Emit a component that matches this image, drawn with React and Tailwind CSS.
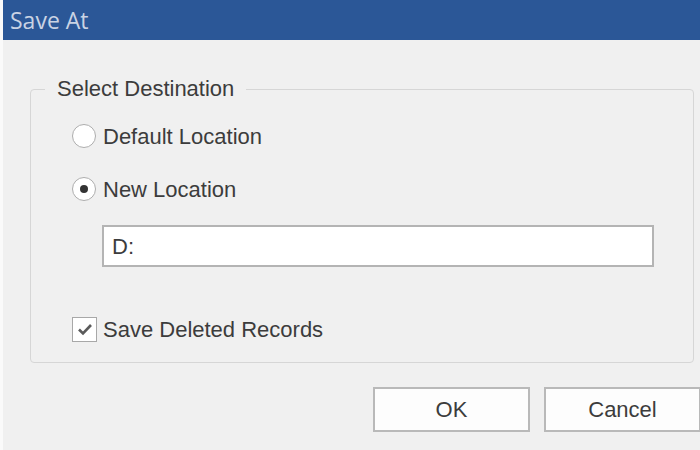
import React from 'react';

const Radio = ({ checked, label }) => (
  <label className="flex items-center h-[30px]">
    <span className="w-[24px] h-[24px] rounded-full border-[1.5px] border-[#adadad] bg-white flex items-center justify-center">
      {checked && <span className="w-[8px] h-[8px] rounded-full bg-[#333333]" />}
    </span>
    <span className="ml-[7px]">{label}</span>
  </label>
);

const App = () => {
  return (
    <div
      className="w-[700px] h-[450px] flex overflow-hidden bg-white text-[#3c3c3c]"
      style={{ fontFamily: '"Liberation Sans", Arial, sans-serif' }}
    >
      <div className="w-[3px] shrink-0 bg-[#fafafa]" />
      <div className="flex-1 flex flex-col bg-[#f0f0f0] min-w-0">
        {/* Title bar */}
        <div className="h-[40px] shrink-0 bg-[#2b5797] flex items-center pl-[7px]">
          <span
            className="text-[23px] text-[#c9d3e4] leading-none"
            style={{ fontFamily: '"Open Sans", "Noto Sans", sans-serif' }}
          >
            Save At
          </span>
        </div>

        {/* Body */}
        <div className="flex-1 flex flex-col">
          <fieldset className="mt-[36px] ml-[27px] w-[664px] h-[287px] border border-[#d6d6d6] rounded-[4px] p-0">
            <legend className="ml-[14px] px-[12px] text-[22px] leading-[26px]">
              Select Destination
            </legend>
            <div className="pl-[41px] pt-[19px] text-[22px] flex flex-col">
              <Radio label="Default Location" />
              <div className="mt-[23px]">
                <Radio checked label="New Location" />
              </div>
              <div className="mt-[21px] ml-[30px] w-[552px] h-[42px] border-2 border-[#b4b4b4] bg-white flex items-center pl-[8px]">
                D:
              </div>
              <label className="mt-[47px] flex items-center h-[30px]">
                <span className="w-[25px] h-[25px] border-[1.5px] border-[#a8a8a8] bg-white flex items-center justify-center">
                  <svg width="18" height="18" viewBox="0 0 18 18" fill="none">
                    <path d="M3 9.5 L7 13.5 L15 5" stroke="#5a5a5a" strokeWidth="2.6" />
                  </svg>
                </span>
                <span className="ml-[6px]">Save Deleted Records</span>
              </label>
            </div>
          </fieldset>

          <div className="mt-[24px] ml-[370px] flex gap-[14px] text-[22px]">
            <button className="w-[157px] h-[45px] shrink-0 border-2 border-[#b9b9b9] bg-[#fdfdfd] text-[#3c3c3c]">
              OK
            </button>
            <button className="w-[157px] h-[45px] shrink-0 border-2 border-[#b9b9b9] bg-[#fdfdfd] text-[#3c3c3c]">
              Cancel
            </button>
          </div>
        </div>
      </div>
    </div>
  );
};

export default App;
